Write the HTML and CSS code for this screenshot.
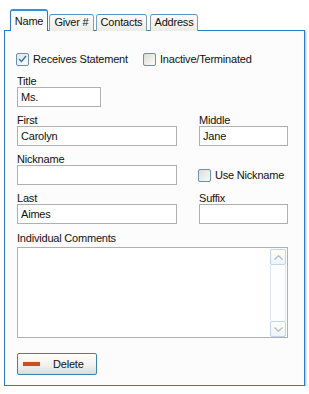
FILE: index.html
```html
<!DOCTYPE html>
<html lang="en">

<head>
    <meta charset="UTF-8">
    <meta name="viewport" content="width=device-width, initial-scale=1.0">
    <title>Individual</title>
    <link rel="stylesheet" href="styles.css">
</head>

<body>
    <div class="window">
        <!-- 分頁標籤 -->
        <div class="tabs">
            <div class="tab tab-name active">Name</div>
            <div class="tab tab-giver">Giver #</div>
            <div class="tab tab-contacts">Contacts</div>
            <div class="tab tab-address">Address</div>
        </div>

        <div class="panel">
            <div class="checks">
                <label class="check check-wide">
                    <span class="box checked">
                        <svg width="9" height="8" viewBox="0 0 9 8"><path d="M1 4 L3.5 6.5 L8 1" fill="none" stroke="#2a72c4" stroke-width="1.4"/></svg>
                    </span>
                    Receives Statement
                </label>
                <label class="check">
                    <span class="box"></span>
                    Inactive/Terminated
                </label>
            </div>

            <div class="fields">
                <div class="field">
                    <span class="label">Title</span>
                    <input type="text" class="title-input" value="Ms.">
                </div>
                <div class="field"></div>

                <div class="field">
                    <span class="label">First</span>
                    <input type="text" value="Carolyn">
                </div>
                <div class="field">
                    <span class="label">Middle</span>
                    <input type="text" value="Jane">
                </div>

                <div class="field">
                    <span class="label">Nickname</span>
                    <input type="text" value="">
                </div>
                <div class="field field-check">
                    <label class="check">
                        <span class="box"></span>
                        Use Nickname
                    </label>
                </div>

                <div class="field">
                    <span class="label">Last</span>
                    <input type="text" value="Aimes">
                </div>
                <div class="field">
                    <span class="label">Suffix</span>
                    <input type="text" value="">
                </div>
            </div>

            <span class="label comments-label">Individual Comments</span>
            <div class="comments">
                <textarea></textarea>
                <div class="scrollbar">
                    <div class="scroll-btn">
                        <svg width="9" height="5" viewBox="0 0 9 5"><path d="M0.5 4.5 L4.5 0.8 L8.5 4.5" fill="none" stroke="#a9b8cf" stroke-width="1.1"/></svg>
                    </div>
                    <div class="scroll-track"></div>
                    <div class="scroll-btn">
                        <svg width="9" height="5" viewBox="0 0 9 5"><path d="M0.5 0.5 L4.5 4.2 L8.5 0.5" fill="none" stroke="#a9b8cf" stroke-width="1.1"/></svg>
                    </div>
                </div>
            </div>

            <button class="delete">
                <span class="delete-icon"></span>
                Delete
            </button>
        </div>
    </div>
</body>

</html>
```

FILE: styles.css
```css
* {
    box-sizing: border-box;
}

body {
    margin: 0;
    padding: 0;
    background-color: #fff;
    font-family: "Liberation Sans", Arial, sans-serif;
    font-size: 11px;
    letter-spacing: -0.2px;
    color: #111;
}

.window {
    padding: 10px 0 0 4px;
}

/* 分頁 */
.tabs {
    display: flex;
    align-items: flex-end;
    padding-left: 6px;
    height: 21px;
    margin-bottom: -1px;
    position: relative;
    z-index: 1;
}

.tab {
    height: 17px;
    line-height: 15px;
    text-align: center;
    border: 1px solid #7f9db9;
    border-bottom: none;
    border-radius: 3px 3px 0 0;
    background: linear-gradient(#fdfdfd, #ecebe6);
    border-top-color: #5b8ec0;
}

.tab.active {
    height: 22px;
    line-height: 21px;
    background: #fcfcfc;
    border-color: #2c7bbd;
    border-top: 2px solid #3b8ed4;
}

.tab-name {
    width: 38px;
}

.tab-giver {
    width: 45px;
    margin-left: 1px;
}

.tab-contacts {
    width: 51px;
    margin-left: 2px;
}

.tab-address {
    width: 48px;
    margin-left: 3px;
}

/* 內容面板 */
.panel {
    width: 301px;
    height: 356px;
    background-color: #fcfcfc;
    border: 1px solid #2c7bbd;
    box-shadow: 1px 1px 0 #c9c9c9, 2px 2px 0 #e6e6e6;
    padding: 21px 0 0 12px;
}

.checks {
    display: flex;
    align-items: center;
    height: 14px;
}

.check {
    display: flex;
    align-items: center;
    gap: 4px;
    line-height: 13px;
}

.check-wide {
    width: 127px;
    margin-left: -1px;
}

.box {
    width: 13px;
    height: 13px;
    border: 1px solid #6f8fae;
    border-radius: 2px;
    background: linear-gradient(135deg, #dcdcd7, #fbfbf9);
    display: flex;
    align-items: center;
    justify-content: center;
}

.box.checked {
    background: linear-gradient(135deg, #e4e4e0, #fdfdfc);
}

/* 欄位 */
.fields {
    display: grid;
    grid-template-columns: 160px 89px;
    column-gap: 22px;
    row-gap: 6px;
    margin-top: 8px;
}

.field {
    display: flex;
    flex-direction: column;
}

.label {
    display: block;
    height: 13px;
    line-height: 14px;
}

.field input {
    width: 100%;
    height: 20px;
    margin: 0;
    border: 1px solid #b0b0b0;
    padding: 0 3px;
    background: #fff;
    font-family: inherit;
    font-size: 11px;
    letter-spacing: -0.2px;
    color: #111;
    outline: none;
}

.field input.title-input {
    width: 84px;
}

.field-check {
    justify-content: flex-end;
    padding-bottom: 3px;
}

.field-check .check {
    margin-left: -1px;
}

.comments-label {
    margin-top: 7px;
    width: 271px;
}

.comments {
    display: flex;
    width: 271px;
    height: 91px;
    margin-top: 3px;
    border: 1px solid #b0b0b0;
    background: #fff;
}

.comments textarea {
    flex: 1;
    border: none;
    resize: none;
    outline: none;
    margin: 0;
    font-family: inherit;
    font-size: 11px;
}

.scrollbar {
    width: 17px;
    display: flex;
    flex-direction: column;
    padding: 1px 1px 0 0;
}

.scroll-btn {
    height: 16px;
    border: 1px solid #c3d3ea;
    border-radius: 2px;
    background: linear-gradient(#ffffff, #eef3fb);
    display: flex;
    align-items: center;
    justify-content: center;
}

.scroll-track {
    flex: 1;
    border-left: 1px solid #dde6f3;
    border-right: 1px solid #dde6f3;
    background: #fdfeff;
}

/* 刪除按鈕 */
.delete {
    display: flex;
    align-items: center;
    width: 80px;
    height: 22px;
    margin-top: 15px;
    padding: 0 0 0 5px;
    border: 1px solid #3c7fb1;
    border-radius: 2px;
    background: linear-gradient(#ffffff, #f0f0ee 60%, #dcdcd6);
    font-family: inherit;
    font-size: 11px;
    letter-spacing: -0.2px;
    color: #111;
}

.delete-icon {
    width: 17px;
    height: 4px;
    margin-right: 13px;
    background: #c8501e;
    box-shadow: 0 0 1px #e8a585;
}
```
